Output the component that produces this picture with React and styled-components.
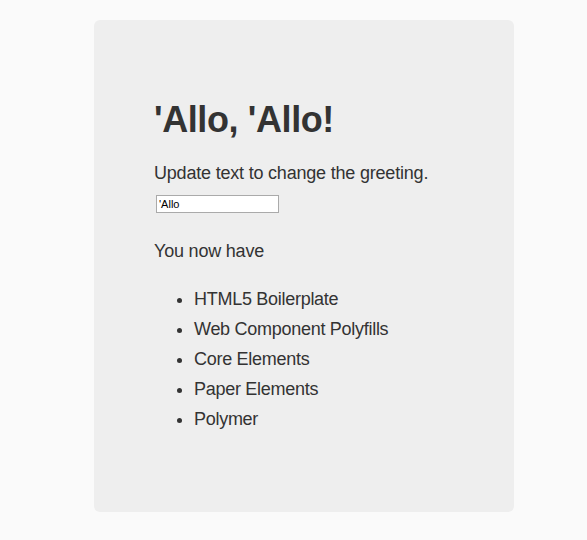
import React, { useState } from 'react';
import styled, { createGlobalStyle } from 'styled-components';

const GlobalStyle = createGlobalStyle`
  html, body {
    margin: 0;
    padding: 0;
    background-color: #fafafa;
  }
  body {
    font-family: "Liberation Sans", Arial, sans-serif;
    color: #333;
  }
`;

const Page = styled.div`
  padding-top: 20px;
  min-height: 540px;
  box-sizing: border-box;
`;

const HeroUnit = styled.div`
  width: 420px;
  margin-left: 94px;
  padding: 80px 60px 78px;
  box-sizing: border-box;
  background-color: #eee;
  border-radius: 6px;
`;

const Title = styled.h1`
  margin: 0;
  font-size: 36px;
  line-height: 40px;
  font-weight: 700;
  letter-spacing: -0.4px;
`;

const Text = styled.p`
  margin: ${props => props.$top}px 0 0;
  font-size: 18px;
  line-height: 24px;
  font-weight: 400;
  letter-spacing: -0.2px;
`;

const GreetingInput = styled.input`
  display: block;
  margin: 10px 0 0 2px;
  width: 123px;
  height: 18px;
  box-sizing: border-box;
  padding: 0 2px;
  border: 1px solid #aaa;
  background: #fff;
  font-family: "Liberation Sans", Arial, sans-serif;
  font-size: 11px;
  color: #000;
  outline: none;
`;

const FeatureList = styled.ul`
  margin: 21px 0 0;
  padding-left: 40px;
  list-style: disc;
`;

const Feature = styled.li`
  font-size: 18px;
  line-height: 30px;
  letter-spacing: -0.28px;
`;

const features = [
  'HTML5 Boilerplate',
  'Web Component Polyfills',
  'Core Elements',
  'Paper Elements',
  'Polymer',
];

const App = () => {
  const [greeting, setGreeting] = useState("'Allo");

  return (
    <Page>
      <GlobalStyle />
      <HeroUnit>
        <Title>{greeting}, {greeting}!</Title>
        <Text $top={21}>Update text to change the greeting.</Text>
        <GreetingInput value={greeting} onChange={e => setGreeting(e.target.value)} />
        <Text $top={26}>You now have</Text>
        <FeatureList>
          {features.map(f => (
            <Feature key={f}>{f}</Feature>
          ))}
        </FeatureList>
      </HeroUnit>
    </Page>
  );
};

export default App;
